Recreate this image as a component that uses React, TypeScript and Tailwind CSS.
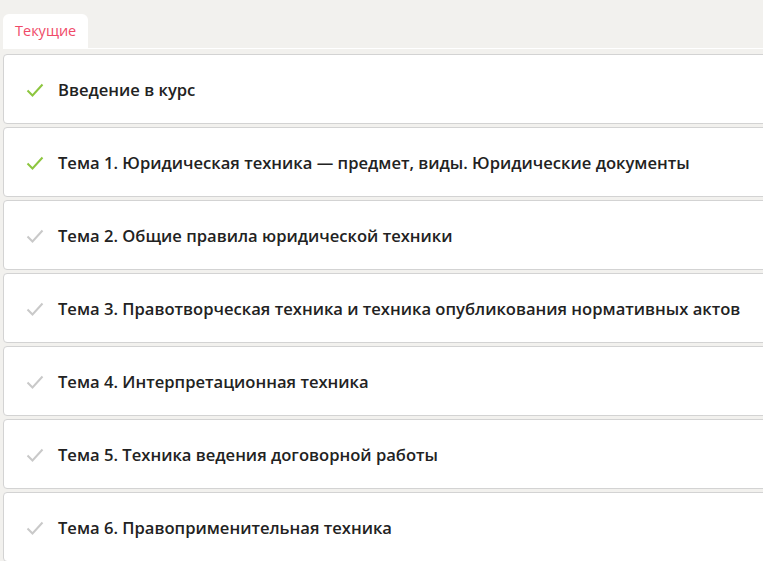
const topics = [
  { title: "Введение в курс", done: true },
  { title: "Тема 1. Юридическая техника — предмет, виды. Юридические документы", done: true },
  { title: "Тема 2. Общие правила юридической техники", done: false },
  { title: "Тема 3. Правотворческая техника и техника опубликования нормативных актов", done: false },
  { title: "Тема 4. Интерпретационная техника", done: false },
  { title: "Тема 5. Техника ведения договорной работы", done: false },
  { title: "Тема 6. Правоприменительная техника", done: false },
];

const Check = ({ done }: { done: boolean }) => (
  <svg width="18" height="14" viewBox="0 0 18 14" fill="none" className="mt-[2px]">
    <path
      d="M1.5 7.5 L6.5 12.5 L16.5 1.5"
      stroke={done ? "#8dc63f" : "#c9c9c9"}
      strokeWidth="2"
    />
  </svg>
);

export default function App() {
  return (
    <div
      className="min-h-screen bg-[#f2f1ee] pt-[14px] pl-[3px] overflow-hidden"
      style={{ fontFamily: "'Open Sans', 'Noto Sans', sans-serif" }}
    >
      <div className="flex border-b border-white">
        <div className="bg-white rounded-t-md px-[12px] h-[34px] flex items-center text-[14.5px] text-[#f04a68]">
          Текущие
        </div>
      </div>
      <div className="mt-[5px] flex flex-col gap-[3px] w-[780px]">
        {topics.map((t) => (
          <div
            key={t.title}
            className="h-[70px] bg-white border border-[#d3d3d3] rounded-[4px] flex items-center pl-[22px]"
          >
            <Check done={t.done} />
            <span className="ml-[14px] mt-[3px] text-[16.6px] font-semibold text-[#222] whitespace-nowrap">
              {t.title}
            </span>
          </div>
        ))}
      </div>
    </div>
  );
}
